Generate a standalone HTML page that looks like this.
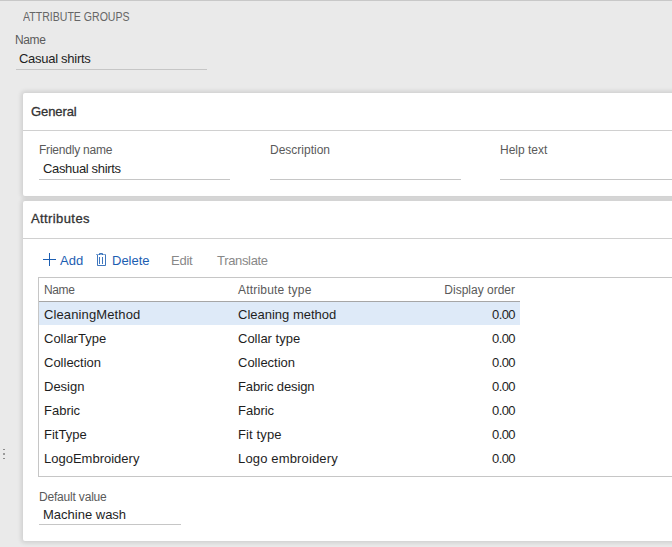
<!DOCTYPE html>
<html><head><meta charset="utf-8">
<style>
*{margin:0;padding:0;box-sizing:border-box}
html,body{width:672px;height:547px;overflow:hidden;background:#eaeaea;font-family:"Liberation Sans",sans-serif;position:relative}
.a{position:absolute;white-space:nowrap;line-height:20px}
.topline{position:absolute;left:0;top:0;width:672px;height:1px;background:#c8c8c8}
.lbl{color:#5a5a5a;font-size:12px}
.val{color:#1e1e1e;font-size:13px}
.ul{position:absolute;height:1px;background:#c6c6c6}
.card{position:absolute;background:#fff;border-radius:2px;box-shadow:0 0 4px 2px rgba(0,0,0,0.11)}
.hdr{font-size:13px;color:#333;font-weight:normal;-webkit-text-stroke:0.3px #333}
.div{position:absolute;height:1px;background:#d0d0d0}
.tb{color:#1c5eb2;font-size:13px}
.dis{color:#888;font-size:13px}
.gh{color:#5a5a5a;font-size:12px}
.gc{color:#1e1e1e;font-size:13px}
.r{text-align:right}
</style></head><body>
<div class="topline"></div>
<div class="a lbl" style="left:22.5px;top:7px;font-size:12px;color:#666;transform:scaleX(0.88);transform-origin:0 0">ATTRIBUTE GROUPS</div>
<div class="a lbl" style="left:15px;top:30px;letter-spacing:-0.37px">Name</div>
<div class="a val" style="left:19px;top:49px;letter-spacing:-0.28px">Casual shirts</div>
<div class="ul" style="left:16px;top:69px;width:191px"></div>

<div class="card" style="left:23px;top:93px;width:660px;height:103px"></div>
<div class="a hdr" style="left:31px;top:102.4px;letter-spacing:-0.1px">General</div>
<div class="div" style="left:23px;top:130px;width:649px"></div>
<div class="a lbl" style="left:39px;top:140px;letter-spacing:-0.22px">Friendly name</div>
<div class="a val" style="left:43px;top:159px;letter-spacing:-0.34px">Cashual shirts</div>
<div class="ul" style="left:39px;top:179px;width:191px"></div>
<div class="a lbl" style="left:270px;top:140px">Description</div>
<div class="ul" style="left:270px;top:179px;width:191px"></div>
<div class="a lbl" style="left:500px;top:140px">Help text</div>
<div class="ul" style="left:500px;top:179px;width:172px"></div>

<div class="card" style="left:23px;top:201px;width:660px;height:340px"></div>
<div class="a hdr" style="left:31px;top:209.4px;letter-spacing:0.4px">Attributes</div>
<div class="div" style="left:23px;top:238px;width:649px"></div>

<!-- toolbar -->
<svg style="position:absolute;left:42px;top:252px" width="15" height="15" viewBox="0 0 15 15"><path d="M1 7.5H14M7.5 1V14" stroke="#1c5eb2" stroke-width="1" fill="none"/></svg>
<div class="a tb" style="left:60px;top:251px">Add</div>
<svg style="position:absolute;left:95px;top:252px" width="13" height="15" viewBox="0 0 13 15"><path d="M4.5 3V1.5H7.5V3M2.5 3V13.5H10.5V3M4.5 5V12M7.5 5V12" stroke="#1c5eb2" stroke-width="1" fill="none" stroke-opacity="0.85"/><path d="M1 2.5H11" stroke="#1c5eb2" stroke-width="1" stroke-opacity="0.55"/></svg>
<div class="a tb" style="left:112px;top:251px">Delete</div>
<div class="a dis" style="left:171px;top:251px;letter-spacing:-0.23px">Edit</div>
<div class="a dis" style="left:217px;top:251px;letter-spacing:-0.33px">Translate</div>

<!-- grid -->
<div style="position:absolute;left:38px;top:277px;width:700px;height:200px;border:1px solid #c6c6c6;background:#fff"></div>
<div style="position:absolute;left:39px;top:301px;width:481px;height:1px;background:#a6a6a6"></div>
<div style="position:absolute;left:39px;top:302px;width:481px;height:23px;background:#deeaf8"></div>
<div class="a gh" style="left:44px;top:280px;letter-spacing:-0.37px">Name</div>
<div class="a gh" style="left:238px;top:280px;letter-spacing:0.2px">Attribute type</div>
<div class="a gh r" style="left:420px;width:95px;top:280px">Display order</div>

<div class="a gc" style="left:44px;top:305px;letter-spacing:0.12px">CleaningMethod</div>
<div class="a gc" style="left:238px;top:305px">Cleaning method</div>
<div class="a gc r" style="left:420px;width:95px;top:305px;letter-spacing:-0.6px">0.00</div>
<div class="a gc" style="left:44px;top:329px">CollarType</div>
<div class="a gc" style="left:238px;top:329px">Collar type</div>
<div class="a gc r" style="left:420px;width:95px;top:329px;letter-spacing:-0.6px">0.00</div>
<div class="a gc" style="left:44px;top:353px">Collection</div>
<div class="a gc" style="left:238px;top:353px">Collection</div>
<div class="a gc r" style="left:420px;width:95px;top:353px;letter-spacing:-0.6px">0.00</div>
<div class="a gc" style="left:44px;top:377px">Design</div>
<div class="a gc" style="left:238px;top:377px;letter-spacing:-0.13px">Fabric design</div>
<div class="a gc r" style="left:420px;width:95px;top:377px;letter-spacing:-0.6px">0.00</div>
<div class="a gc" style="left:44px;top:401px">Fabric</div>
<div class="a gc" style="left:238px;top:401px">Fabric</div>
<div class="a gc r" style="left:420px;width:95px;top:401px;letter-spacing:-0.6px">0.00</div>
<div class="a gc" style="left:44px;top:425px">FitType</div>
<div class="a gc" style="left:238px;top:425px;letter-spacing:0.13px">Fit type</div>
<div class="a gc r" style="left:420px;width:95px;top:425px;letter-spacing:-0.6px">0.00</div>
<div class="a gc" style="left:44px;top:449px">LogoEmbroidery</div>
<div class="a gc" style="left:238px;top:449px;letter-spacing:0.15px">Logo embroidery</div>
<div class="a gc r" style="left:420px;width:95px;top:449px;letter-spacing:-0.6px">0.00</div>

<div class="a lbl" style="left:39px;top:487px;letter-spacing:-0.19px">Default value</div>
<div class="a val" style="left:43px;top:505px">Machine wash</div>
<div class="ul" style="left:39px;top:524px;width:142px"></div>

<!-- left dots -->
<div style="position:absolute;left:3px;top:449px;width:2px;height:1px;background:#8c8c8c"></div>
<div style="position:absolute;left:3px;top:453px;width:2px;height:2px;background:#9a9a9a"></div>
<div style="position:absolute;left:3px;top:458px;width:2px;height:1px;background:#8c8c8c"></div>
</body></html>
